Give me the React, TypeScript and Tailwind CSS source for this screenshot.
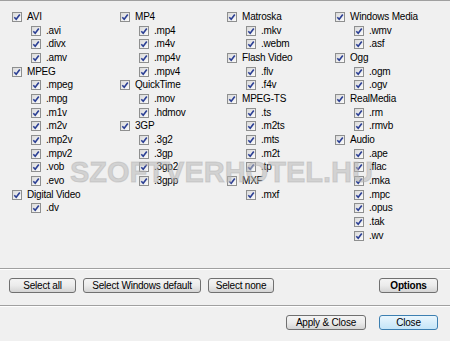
import React from 'react';

type Group = { name: string; exts: string[] };

const columns: Group[][] = [
  [
    { name: 'AVI', exts: ['.avi', '.divx', '.amv'] },
    { name: 'MPEG', exts: ['.mpeg', '.mpg', '.m1v', '.m2v', '.mp2v', '.mpv2', '.vob', '.evo'] },
    { name: 'Digital Video', exts: ['.dv'] },
  ],
  [
    { name: 'MP4', exts: ['.mp4', '.m4v', '.mp4v', '.mpv4'] },
    { name: 'QuickTime', exts: ['.mov', '.hdmov'] },
    { name: '3GP', exts: ['.3g2', '.3gp', '.3gp2', '.3gpp'] },
  ],
  [
    { name: 'Matroska', exts: ['.mkv', '.webm'] },
    { name: 'Flash Video', exts: ['.flv', '.f4v'] },
    { name: 'MPEG-TS', exts: ['.ts', '.m2ts', '.mts', '.m2t', '.tp'] },
    { name: 'MXF', exts: ['.mxf'] },
  ],
  [
    { name: 'Windows Media', exts: ['.wmv', '.asf'] },
    { name: 'Ogg', exts: ['.ogm', '.ogv'] },
    { name: 'RealMedia', exts: ['.rm', '.rmvb'] },
    { name: 'Audio', exts: ['.ape', '.flac', '.mka', '.mpc', '.opus', '.tak', '.wv'] },
  ],
];

function CheckBox() {
  return (
    <span className="flex h-[10px] w-[10px] shrink-0 items-center justify-center border border-[#8e8f8f] bg-gradient-to-br from-[#dadada] to-[#fbfbfb]">
      <svg width="8" height="8" viewBox="0 0 8 8">
        <path d="M1.3 4.2 L3.2 6.2 L6.8 1.4" fill="none" stroke="#2b3f94" strokeWidth="1.6" />
      </svg>
    </span>
  );
}

function Row({ label, child }: { label: string; child?: boolean }) {
  return (
    <div className={`flex h-[13.7px] items-center gap-[5px] ${child ? 'pl-[19px]' : ''}`}>
      <CheckBox />
      <span className="whitespace-nowrap leading-none">{label}</span>
    </div>
  );
}

function Btn({ children, bold, primary, w }: { children: React.ReactNode; bold?: boolean; primary?: boolean; w: string }) {
  return (
    <button
      className={`flex h-[15px] items-center justify-center rounded-[3px] border leading-none ${w} ${
        primary
          ? 'border-[#3c7fb1] bg-gradient-to-b from-[#eaf6fd] to-[#c4e5f8]'
          : 'border-[#707070] bg-gradient-to-b from-[#f4f4f4] via-[#ebebeb] to-[#d4d4d4]'
      } ${bold ? 'font-bold' : ''}`}
    >
      {children}
    </button>
  );
}

export default function App() {
  return (
    <div
      className="relative flex h-[341px] w-[450px] flex-col overflow-hidden border-t border-[#a0a0a0] bg-[#f0f0f0] text-[10px] tracking-[-0.2px] text-black"
      style={{ fontFamily: '"Liberation Sans", Arial, sans-serif' }}
    >
      {/* checkbox columns */}
      <div className="grid h-[267px] grid-cols-[108px_107px_108px_1fr] pl-[12px] pt-[9px]">
        {columns.map((col, i) => (
          <div key={i} className="flex flex-col">
            {col.map((g) => (
              <React.Fragment key={g.name}>
                <Row label={g.name} />
                {g.exts.map((e) => (
                  <Row key={e} label={e} child />
                ))}
              </React.Fragment>
            ))}
          </div>
        ))}
      </div>

      <div className="h-[2px] border-t border-b border-t-[#a0a0a0] border-b-white" />

      <div className="flex items-center gap-[7px] pl-[9px] pr-[12px] pt-[8px] pb-[12px]">
        <Btn w="w-[67px]">Select all</Btn>
        <Btn w="w-[118px]">Select Windows default</Btn>
        <Btn w="w-[66px]">Select none</Btn>
        <div className="flex-1" />
        <Btn w="w-[59px]" bold>Options</Btn>
      </div>

      <div className="h-[2px] border-t border-b border-t-[#a0a0a0] border-b-white" />

      <div className="flex items-center justify-end gap-[13px] pr-[12px] pt-[8px]">
        <Btn w="w-[80px]">Apply &amp; Close</Btn>
        <Btn w="w-[59px]" primary>Close</Btn>
      </div>

      {/* watermark */}
      <div
        className="pointer-events-none absolute left-[70px] top-[150px] text-[29px] font-bold tracking-[0px] text-[#b4b4b4]/50 [-webkit-text-stroke:1px_rgba(180,180,180,0.5)]"
        style={{ fontFamily: '"Liberation Sans", Arial, sans-serif' }}
      >
        SZOFTVERHOTEL.HU
      </div>
    </div>
  );
}
